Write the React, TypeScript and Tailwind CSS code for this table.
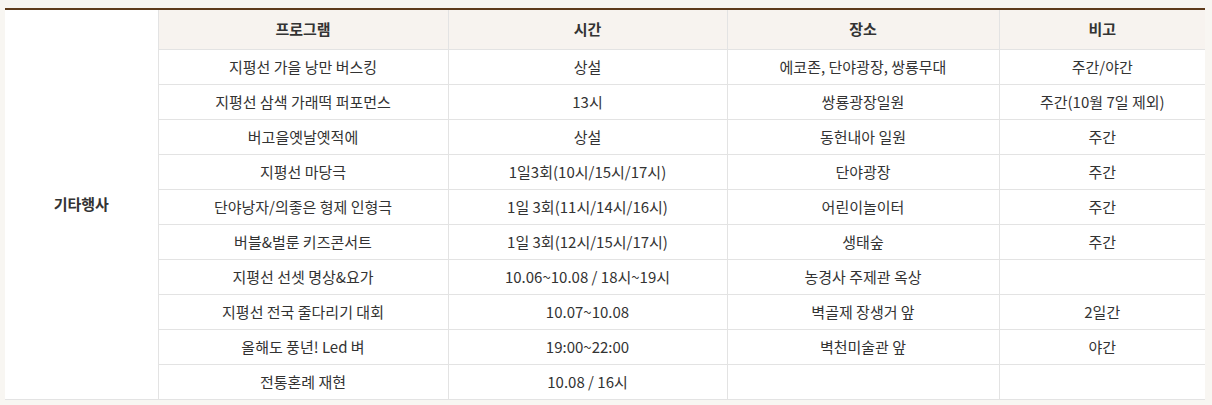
import React from "react";

const rows: [string, string, string, string][] = [
  ["지평선 가을 낭만 버스킹", "상설", "에코존, 단야광장, 쌍룡무대", "주간/야간"],
  ["지평선 삼색 가래떡 퍼포먼스", "13시", "쌍룡광장일원", "주간(10월 7일 제외)"],
  ["버고을옛날옛적에", "상설", "동헌내아 일원", "주간"],
  ["지평선 마당극", "1일3회(10시/15시/17시)", "단야광장", "주간"],
  ["단야낭자/의좋은 형제 인형극", "1일 3회(11시/14시/16시)", "어린이놀이터", "주간"],
  ["버블&벌룬 키즈콘서트", "1일 3회(12시/15시/17시)", "생태숲", "주간"],
  ["지평선 선셋 명상&요가", "10.06~10.08 / 18시~19시", "농경사 주제관 옥상", ""],
  ["지평선 전국 줄다리기 대회", "10.07~10.08", "벽골제 장생거 앞", "2일간"],
  ["올해도 풍년! Led 벼", "19:00~22:00", "벽천미술관 앞", "야간"],
  ["전통혼례 재현", "10.08 / 16시", "", ""],
];

export default function App() {
  return (
    <div
      className="w-[1212px] h-[405px] bg-[#f8f6f2] pt-[8px] pl-[5px]"
      style={{ fontFamily: '"Noto Sans CJK KR", "Noto Sans", sans-serif' }}
    >
      <table className="w-[1200px] border-collapse table-fixed bg-white border-t-2 border-t-[#5e3b1c] text-[15px] leading-[20px] text-[#333]">
        <colgroup>
          <col className="w-[153px]" />
          <col className="w-[290px]" />
          <col className="w-[279px]" />
          <col className="w-[272px]" />
          <col className="w-[206px]" />
        </colgroup>
        <tbody>
          <tr className="h-[40px]">
            <th
              rowSpan={11}
              className="bg-white border-b border-r border-[#e3e3e3] font-bold text-center align-middle p-0"
            >
              기타행사
            </th>
            <th className="bg-[#f7f3ef] border border-[#e3e3e3] border-t-0 font-bold p-0">프로그램</th>
            <th className="bg-[#f7f3ef] border border-[#e3e3e3] border-t-0 font-bold p-0">시간</th>
            <th className="bg-[#f7f3ef] border border-[#e3e3e3] border-t-0 font-bold p-0">장소</th>
            <th className="bg-[#f7f3ef] border border-[#e3e3e3] border-t-0 border-r-0 font-bold p-0">비고</th>
          </tr>
          {rows.map((r, i) => (
            <tr key={i} className="h-[35px]">
              {r.map((c, j) => (
                <td
                  key={j}
                  className={
                    j === 3
                      ? "border border-[#e3e3e3] border-r-0 text-center p-0"
                      : "border border-[#e3e3e3] text-center p-0"
                  }
                >
                  {c}
                </td>
              ))}
            </tr>
          ))}
        </tbody>
      </table>
    </div>
  );
}
